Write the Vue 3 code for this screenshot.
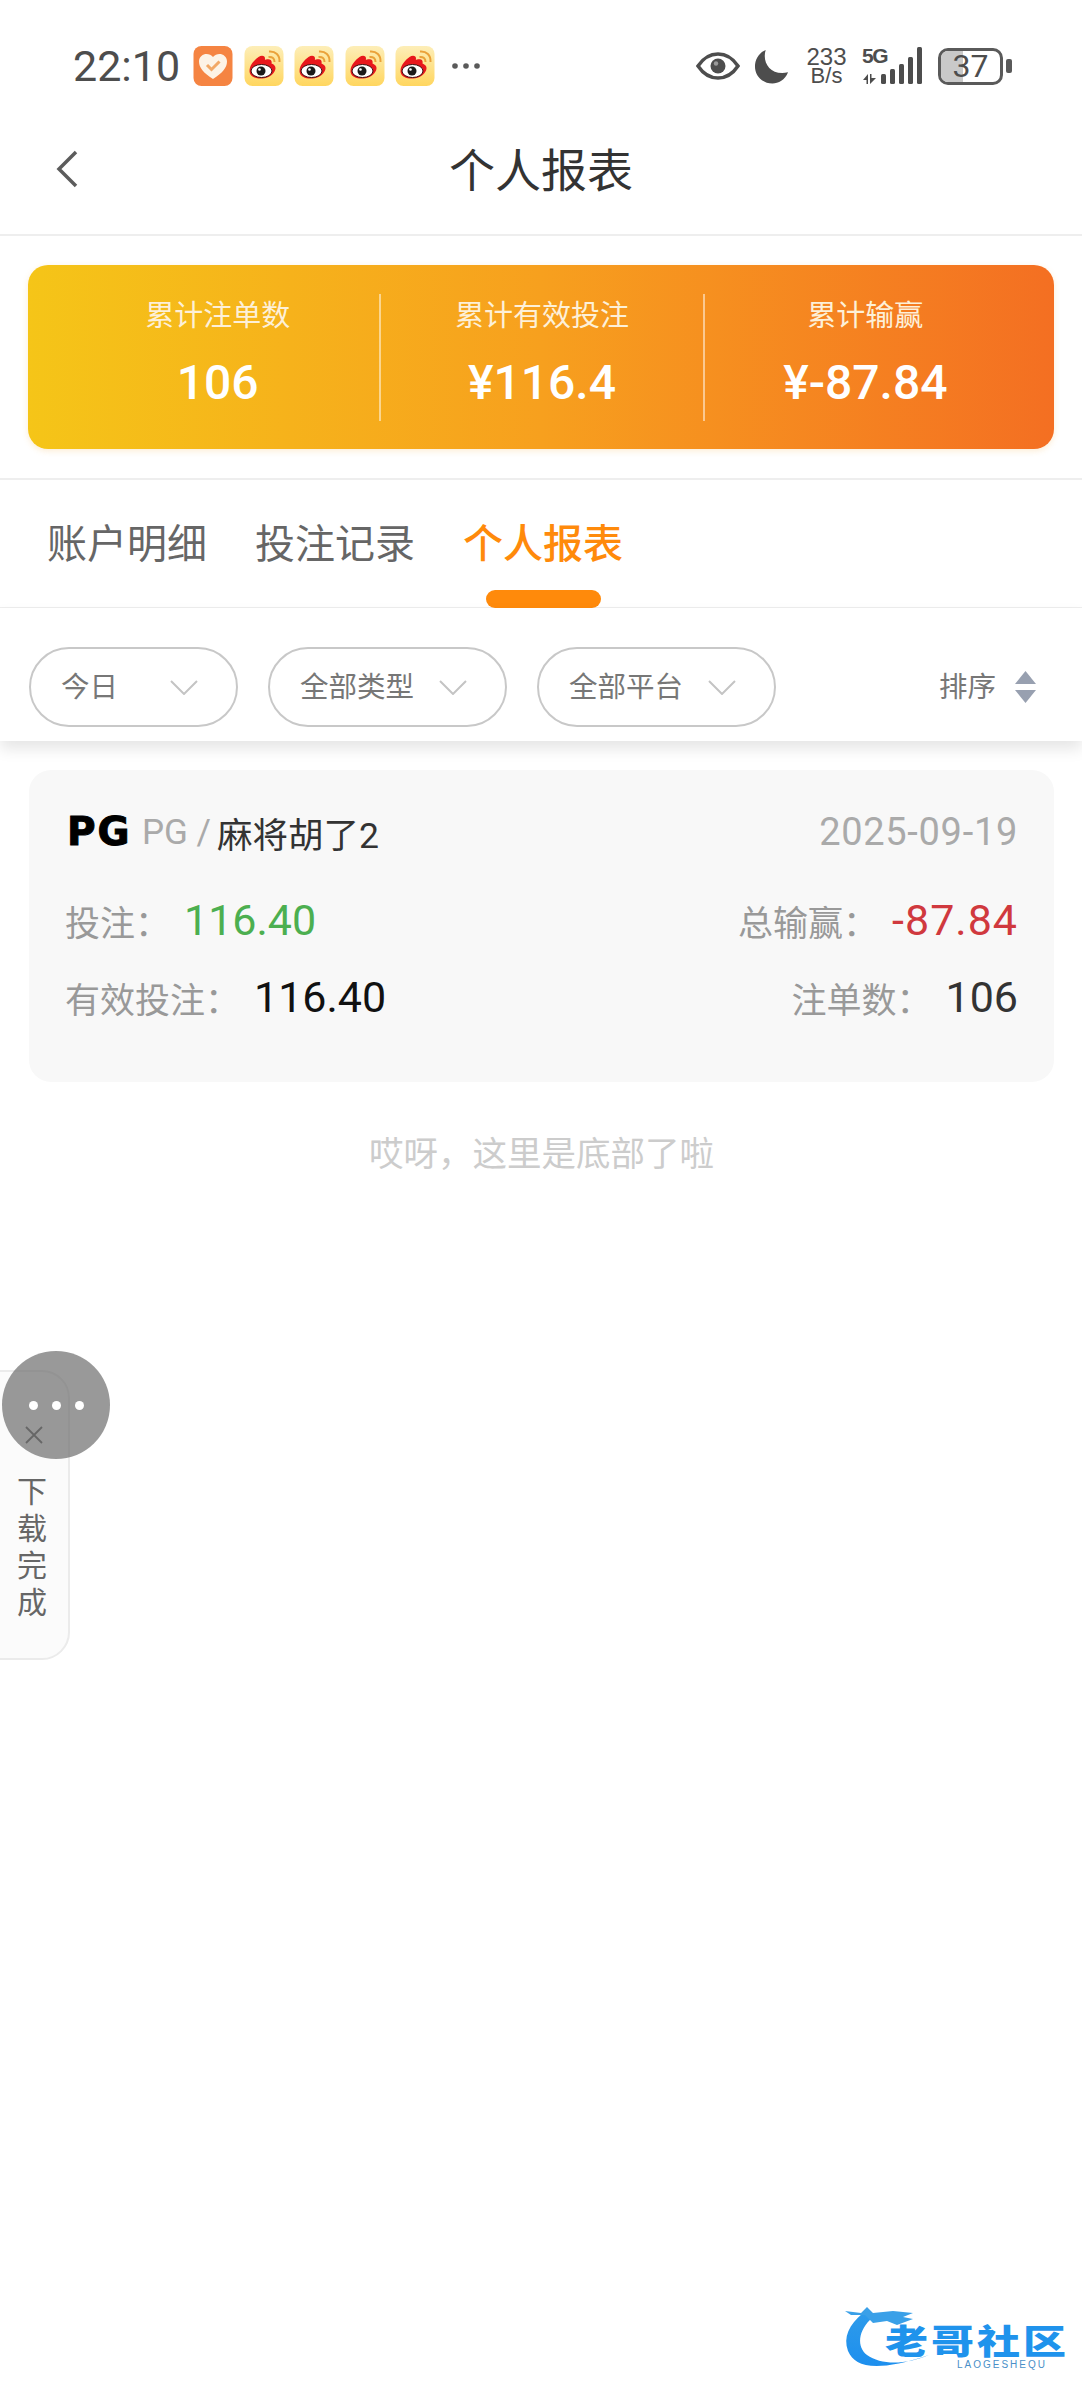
<template>
  <div class="page">
    <div class="status-bar">
      <span class="time">22:10</span>
      <svg class="app-icon" viewBox="0 0 39 40">
        <rect width="39" height="40" rx="8" fill="#f58442" />
        <path d="M19.500 33C10 27 5.500 21.500 5.500 15.500C5.500 10.500 9.500 8 13 8C15.500 8 18 9 19.500 11C21 9 23.500 8 26 8C29.500 8 33.500 10.500 33.500 15.500C33.500 21.500 29 27 19.500 33Z" fill="#fdf3e6" />
        <path d="M13.500 19L18 23.500L26 15.500" fill="none" stroke="#f2a866" stroke-width="3" />
      </svg>
      <svg v-for="n in 4" :key="n" class="app-icon" viewBox="0 0 39 40">
        <defs>
          <linearGradient :id="'wb' + n" x1="0" y1="0" x2="0" y2="1">
            <stop offset="0" stop-color="#fdeeb8" />
            <stop offset="1" stop-color="#ffd65f" />
          </linearGradient>
        </defs>
        <rect width="39" height="40" rx="8" :fill="'url(#wb' + n + ')'" />
        <path d="M5 25C5 19 10 14 14 11C17 9 20 9.500 20.500 12C20.500 13 20 14 21 13.800C25 12.500 28 14 27 17.500C31 19 32 22 30 25.500C27 31 20 33 14 32.500C9 32 5 29.500 5 25Z" fill="#e8171c" />
        <ellipse cx="17" cy="25" rx="10.500" ry="6.500" fill="#fff" stroke="#3a1010" stroke-width="1" />
        <circle cx="16.500" cy="25" r="4.500" fill="#1a1a1a" />
        <circle cx="15" cy="23.500" r="1.300" fill="#fff" />
        <path d="M24 11C28 10.500 30 12.500 30 16M24.500 5.500C31 5 35.500 9 35 16" fill="none" stroke="#eaa23a" stroke-width="2" />
      </svg>
      <svg class="more-dots" viewBox="0 0 28 8">
        <circle cx="3" cy="4" r="2.800" />
        <circle cx="14" cy="4" r="2.800" />
        <circle cx="25" cy="4" r="2.800" />
      </svg>
      <div class="status-right">
        <svg class="eye" viewBox="0 0 44 30">
          <path d="M2 15C8 6 15 3 22 3C29 3 36 6 42 15C36 24 29 27 22 27C15 27 8 24 2 15Z" fill="none" stroke="#4d4d4d" stroke-width="3.500" />
          <circle cx="22" cy="15" r="7.500" fill="#4d4d4d" />
          <circle cx="20" cy="12.500" r="2.200" fill="#9a9a9a" />
        </svg>
        <svg class="moon" viewBox="0 0 36 36">
          <path d="M12 1C8 14 17 28 35 24C32 32 25 35.500 19 35.500C8 35.500 1 27 1 18C1 11 5 4 12 1Z" fill="#4d4d4d" />
        </svg>
        <div class="speed"><span>233</span><span class="speed-unit">B/s</span></div>
        <div class="signal">
          <span class="five-g">5G</span>
          <svg class="bars" viewBox="0 0 60 38">
            <path d="M6 27L1 33H4.500V37H6ZM8 27V37L14 31H9.500V27Z" />
            <rect x="19" y="27" width="5" height="10" rx="1.500" />
            <rect x="28" y="22" width="5" height="15" rx="1.500" />
            <rect x="37" y="17" width="5" height="20" rx="1.500" />
            <rect x="46" y="10" width="5" height="27" rx="1.500" />
            <rect x="55" y="0" width="5" height="37" rx="1.500" />
          </svg>
        </div>
        <div class="battery">
          <div class="battery-fill"></div>
          <span>37</span>
        </div>
        <div class="battery-nub"></div>
      </div>
    </div>

    <div class="nav">
      <svg class="back" viewBox="0 0 22 38">
        <path d="M20 2L3 19L20 36" fill="none" stroke="#5c5c5c" stroke-width="3.500" />
      </svg>
      <span class="nav-title">个人报表</span>
    </div>

    <div class="summary-wrap">
      <div class="summary">
        <div v-for="item in summary" :key="item.label" class="summary-col">
          <div class="summary-label">{{ item.label }}</div>
          <div class="summary-value">{{ item.value }}</div>
        </div>
      </div>
    </div>

    <div class="tabs">
      <div v-for="(tab, i) in tabs" :key="tab" class="tab" :class="{ active: i === 2 }">{{ tab }}</div>
    </div>

    <div class="filters">
      <div v-for="f in filters" :key="f.label" class="pill" :style="{ width: f.width + 'px' }">
        <span>{{ f.label }}</span>
        <svg class="pill-arrow" viewBox="0 0 28 15">
          <path d="M1 1L14 14L27 1" fill="none" stroke="#c4c4c4" stroke-width="2" />
        </svg>
      </div>
      <div class="sort">
        <span>排序</span>
        <svg class="sort-icon" viewBox="0 0 21 32">
          <path d="M10.500 0L21 13H0Z" fill="#98a0b0" />
          <path d="M0 19H21L10.500 32Z" fill="#98a0b0" />
        </svg>
      </div>
    </div>

    <div class="list">
      <div class="record">
        <div class="record-head">
          <div class="game">
            <span class="pg-logo">PG</span>
            <span class="game-vendor">PG /</span>
            <span class="game-name">麻将胡了2</span>
          </div>
          <span class="date">2025-09-19</span>
        </div>
        <div class="record-row first-row">
          <div class="cell">
            <span class="key">投注：</span>
            <span class="num green">116.40</span>
          </div>
          <div class="cell">
            <span class="key">总输赢：</span>
            <span class="num red">-87.84</span>
          </div>
        </div>
        <div class="record-row">
          <div class="cell">
            <span class="key">有效投注：</span>
            <span class="num black">116.40</span>
          </div>
          <div class="cell">
            <span class="key">注单数：</span>
            <span class="num dark">106</span>
          </div>
        </div>
      </div>
      <div class="list-end">哎呀，这里是底部了啦</div>
    </div>

    <div class="download">
      <svg class="download-close" viewBox="0 0 20 20">
        <path d="M2 2L18 18M18 2L2 18" stroke="#555" stroke-width="1.800" fill="none" />
      </svg>
      <div class="download-text">
        <span>下</span><span>载</span><span>完</span><span>成</span>
      </div>
    </div>
    <div class="bubble">
      <i></i><i></i><i></i>
    </div>

    <div class="watermark">
      <svg class="dragon" viewBox="0 0 90 72">
        <defs>
          <linearGradient id="dragonBlue" x1="0" y1="0" x2="0" y2="1">
            <stop offset="0" stop-color="#2e9bea" />
            <stop offset="1" stop-color="#1d8fee" />
          </linearGradient>
        </defs>
        <path d="M20 8C6 20 0 32 5 46C12 62 32 68 86 50C62 60 38 60 24 50C14 42 14 26 30 12Z" fill="url(#dragonBlue)" />
        <path d="M2 6L18 8L24 2L30 8L50 6L70 8L60 12L70 14L54 20L44 16L30 18L22 10L8 10Z" fill="#3aa0e8" />
      </svg>
      <div class="wm-text">
        <div class="wm-title">老哥社区</div>
        <div class="wm-sub">LAOGESHEQU</div>
      </div>
    </div>
  </div>
</template>

<script setup>
const summary = [
  { label: '累计注单数', value: '106' },
  { label: '累计有效投注', value: '¥116.4' },
  { label: '累计输赢', value: '¥-87.84' },
]

const tabs = ['账户明细', '投注记录', '个人报表']

const filters = [
  { label: '今日', width: 209 },
  { label: '全部类型', width: 239 },
  { label: '全部平台', width: 239 },
]
</script>

<style>
html,
body {
  margin: 0;
  background: #fff;
}
</style>

<style scoped>
.page {
  position: relative;
  width: 1082px;
  height: 2400px;
  overflow: hidden;
  background: #fff;
  font-family: Roboto, "Noto Sans CJK SC", sans-serif;
}

.status-bar {
  height: 68px;
  padding: 32px 70px 0 73px;
  display: flex;
  align-items: center;
  color: #4d4d4d;
}
.time {
  width: 120px;
  font-size: 43px;
  line-height: 40px;
}
.app-icon {
  width: 40px;
  height: 40px;
  margin-right: 10.500px;
}
.more-dots {
  width: 28px;
  height: 8px;
  margin-left: 6px;
  fill: #5a5a5a;
}
.status-right {
  margin-left: auto;
  display: flex;
  align-items: center;
}
.eye {
  width: 44px;
  height: 30px;
}
.moon {
  width: 35px;
  height: 35px;
  margin-left: 14px;
}
.speed {
  width: 41px;
  margin-left: 17px;
  display: flex;
  flex-direction: column;
  align-items: center;
  font-family: "Liberation Sans", sans-serif;
  font-size: 24px;
  line-height: 19px;
}
.speed-unit {
  font-size: 22px;
}
.signal {
  position: relative;
  width: 60px;
  height: 38px;
  margin-left: 15px;
}
.five-g {
  position: absolute;
  left: 0;
  top: -2px;
  font-family: "Liberation Sans", sans-serif;
  font-size: 21px;
  line-height: 22px;
  font-weight: 700;
  letter-spacing: -1.500px;
}
.bars {
  display: block;
  width: 60px;
  height: 38px;
  fill: #4d4d4d;
}
.battery {
  position: relative;
  width: 65px;
  height: 37px;
  margin-left: 16px;
  box-sizing: border-box;
  border: 3px solid #5a5a5a;
  border-radius: 10px;
  overflow: hidden;
  text-align: center;
  font-size: 32px;
  line-height: 31px;
  color: #4d4d4d;
}
.battery-fill {
  position: absolute;
  left: 0;
  top: 0;
  bottom: 0;
  width: 37%;
  background: #c9c9c9;
}
.battery span {
  position: relative;
}
.battery-nub {
  width: 6px;
  height: 14px;
  margin-left: 3px;
  border-radius: 2px;
  background: #5a5a5a;
}

.nav {
  position: relative;
  height: 134px;
  border-bottom: 2px solid #eee;
  display: flex;
  align-items: center;
  justify-content: center;
}
.back {
  position: absolute;
  left: 56px;
  top: 50px;
  width: 22px;
  height: 38px;
}
.nav-title {
  font-size: 46px;
  color: #333;
}

.summary-wrap {
  padding: 29px 28px;
  border-bottom: 2px solid #eee;
}
.summary {
  height: 184px;
  padding: 0 28px;
  border-radius: 20px;
  background: linear-gradient(90deg, #f5c518, #f7a01e 50%, #f46f22);
  box-shadow: 0 2px 6px rgba(240, 160, 40, 0.2);
  display: grid;
  grid-template-columns: repeat(3, 1fr);
  align-items: center;
}
.summary-col {
  height: 127px;
  box-sizing: border-box;
  color: #fff;
  text-align: center;
}
.summary-col + .summary-col {
  border-left: 2px solid rgba(255, 255, 255, 0.5);
}
.summary-label {
  margin-top: 2px;
  font-size: 29px;
  line-height: 40px;
  color: #fdf0d8;
}
.summary-value {
  margin-top: 20px;
  font-size: 48px;
  line-height: 54px;
  font-weight: 500;
}

.tabs {
  position: relative;
  height: 127px;
  padding-left: 47px;
  border-bottom: 1px solid #eee;
  display: flex;
  gap: 48px;
}
.tab {
  padding-top: 37px;
  font-size: 40px;
  line-height: 56px;
  color: #666;
}
.tab.active {
  position: relative;
  color: #ff8a0b;
  font-weight: 500;
}
.tab.active::after {
  content: "";
  position: absolute;
  left: 23px;
  bottom: -1px;
  width: 115px;
  height: 18px;
  border-radius: 9px;
  background: #ff8a0b;
}

.filters {
  position: relative;
  height: 133px;
  padding: 39px 46px 0 29px;
  box-sizing: border-box;
  display: flex;
  align-items: flex-start;
  gap: 30px;
  box-shadow: 0 8px 14px rgba(0, 0, 0, 0.1);
  background: #fff;
}
.pill {
  height: 80px;
  padding: 0 38px 6px 30px;
  box-sizing: border-box;
  border: 2.500px solid #c8c8c8;
  border-radius: 40px;
  display: flex;
  align-items: center;
  justify-content: space-between;
  font-size: 28.500px;
  color: #777;
}
.pill-arrow {
  width: 28px;
  height: 15px;
  margin-top: 6px;
}
.sort {
  margin-left: auto;
  height: 80px;
  padding-bottom: 6px;
  box-sizing: border-box;
  display: flex;
  align-items: center;
  gap: 19px;
  font-size: 28.500px;
  color: #777;
}
.sort-icon {
  width: 21px;
  height: 32px;
  margin-top: 6px;
}

.list {
  padding: 29px 28px 0 29px;
}
.record {
  height: 312px;
  padding: 38px 36px 0 36px;
  box-sizing: border-box;
  border-radius: 22px;
  background: #f8f8f8;
}
.record-head {
  height: 48px;
  display: flex;
  align-items: center;
  justify-content: space-between;
}
.game {
  display: flex;
  align-items: center;
}
.pg-logo {
  width: 75px;
  margin-left: 2px;
  font-family: "DejaVu Sans", sans-serif;
  font-size: 39px;
  line-height: 48px;
  font-weight: 700;
  letter-spacing: 2px;
  color: #000;
  -webkit-text-stroke: 1px #000;
}
.game-vendor {
  font-size: 35px;
  color: #aaa;
}
.game-name {
  margin-left: 6px;
  font-size: 35.500px;
  color: #333;
}
.date {
  font-size: 38px;
  letter-spacing: 0.700px;
  color: #aaa;
}
.record-row {
  margin-top: 22px;
  height: 55px;
  display: flex;
  align-items: center;
  justify-content: space-between;
}
.first-row {
  margin-top: 37px;
}
.cell {
  display: flex;
  align-items: center;
}
.key {
  font-size: 35px;
  color: #999;
}
.num {
  margin-left: 14px;
  font-size: 43px;
  line-height: 55px;
}
.green {
  color: #4caf50;
}
.red {
  letter-spacing: 1px;
  color: #d0393e;
}
.black {
  color: #111;
}
.dark {
  color: #333;
}
.list-end {
  margin-top: 49px;
  text-align: center;
  font-size: 34.500px;
  line-height: 46px;
  color: #ccc;
}

.download {
  position: absolute;
  left: -30px;
  top: 1370px;
  width: 100px;
  height: 290px;
  box-sizing: border-box;
  padding: 60px 0 0 30px;
  border: 2px solid #ebebeb;
  border-radius: 28px;
  background: #fbfbfb;
}
.download-close {
  position: absolute;
  left: 52px;
  top: 53px;
  width: 20px;
  height: 20px;
}
.download-text {
  margin-top: 41px;
  width: 38px;
  margin-left: 11px;
  display: flex;
  flex-direction: column;
  align-items: center;
  font-size: 30px;
  line-height: 37px;
  color: #666;
}
.bubble {
  position: absolute;
  left: 2px;
  top: 1351px;
  width: 108px;
  height: 108px;
  border-radius: 50%;
  background: rgba(110, 110, 110, 0.7);
  display: flex;
  align-items: center;
  justify-content: center;
  gap: 14px;
}
.bubble i {
  width: 9px;
  height: 9px;
  border-radius: 50%;
  background: #fff;
}

.watermark {
  position: absolute;
  left: 843px;
  top: 2305px;
  width: 225px;
  height: 72px;
}
.dragon {
  position: absolute;
  left: 0;
  top: 0;
  width: 90px;
  height: 72px;
}
.wm-text {
  position: absolute;
  left: 42px;
  top: 16px;
  white-space: nowrap;
  text-align: center;
}
.wm-title {
  font-size: 43px;
  line-height: 42px;
  font-weight: 900;
  letter-spacing: 3px;
  color: #1f93ec;
  transform: scaleY(0.8);
}
.wm-sub {
  margin-top: -4px;
  padding-left: 50px;
  font-family: "Liberation Sans", sans-serif;
  font-size: 10px;
  line-height: 12px;
  letter-spacing: 2px;
  color: #4a90c8;
}
</style>
